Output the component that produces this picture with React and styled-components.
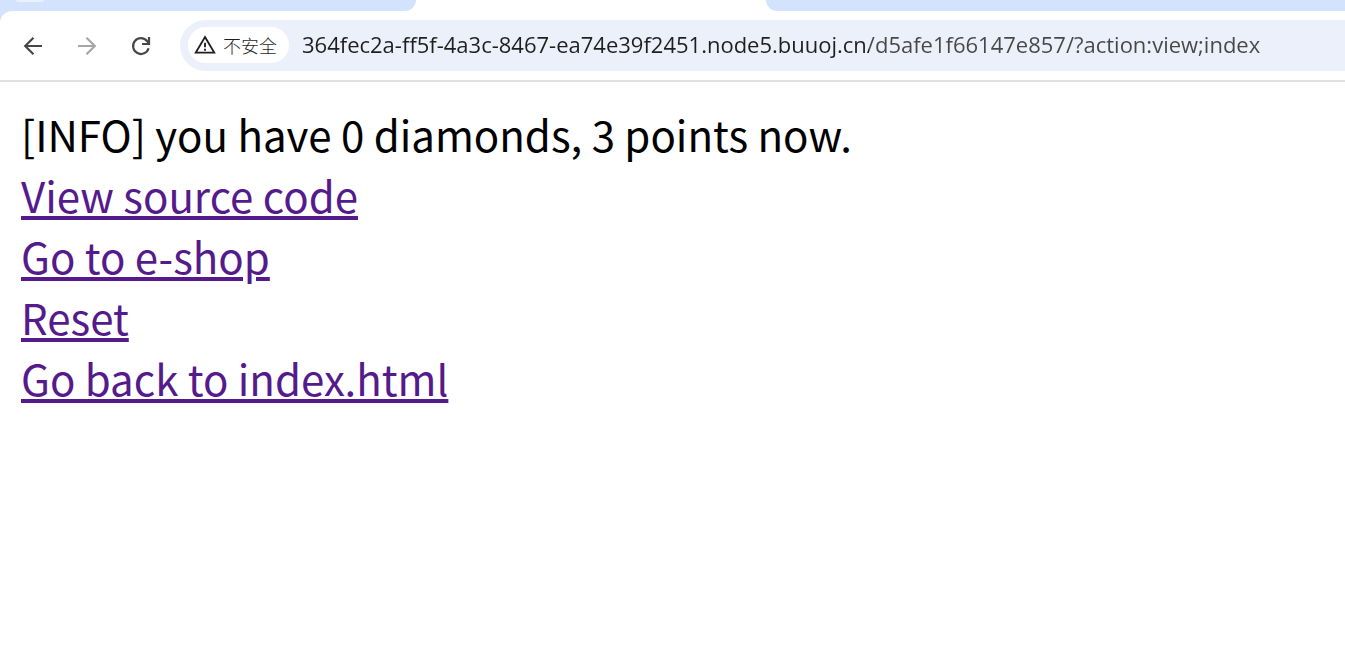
import React from "react";
import styled, { createGlobalStyle } from "styled-components";

const GlobalStyle = createGlobalStyle`
  * { box-sizing: border-box; }
  body {
    margin: 0;
    background: #ffffff;
    color: #000000;
    font-family: "Noto Sans CJK SC", "Noto Sans", sans-serif;
  }
`;

const TabStrip = styled.div`
  display: flex;
  height: 11px;
  background: #ffffff;
`;

const InactiveTabs = styled.div`
  flex: ${(p) => (p.$grow ? "1" : "0 0 416px")};
  padding-left: ${(p) => (p.$grow ? "0" : "16px")};
  background: #d3e3fd;
  border-radius: ${(p) => (p.$grow ? "0 0 0 16px" : "0 0 16px 0")};
`;

const TabSearch = styled.div`
  width: 28px;
  height: 2px;
  background: #e9f0fe;
  border-radius: 0 0 8px 8px;
`;

const ActiveTab = styled.div`
  flex: 0 0 350px;
`;

const ToolbarFrame = styled.div`
  background: linear-gradient(to right, #d3e3fd 16px, #ffffff 16px);
`;

const Toolbar = styled.header`
  display: flex;
  align-items: center;
  height: 71px;
  padding: 0 0 0 20px;
  background: #ffffff;
  border-bottom: 2px solid #e1e1e1;
  border-top-left-radius: 12px;
`;

const Nav = styled.nav`
  display: flex;
  gap: 28px;
  margin-right: 26px;
`;

const IconButton = styled.button`
  display: flex;
  width: 26px;
  height: 26px;
  padding: 0;
  border: 0;
  background: none;
  color: ${(p) => (p.disabled ? "#a6a6a6" : "#474747")};
`;

const AddressBar = styled.div`
  display: flex;
  flex: 1;
  align-items: center;
  min-width: 0;
  height: 51px;
  padding: 0 0 1px 8px;
  background: #ecf0fa;
  border-radius: 26px 0 0 26px;
`;

const SecurityChip = styled.button`
  display: flex;
  flex: 0 0 auto;
  align-items: center;
  gap: 6px;
  width: 101px;
  height: 36px;
  padding: 0 0 0 5px;
  border: 0;
  border-radius: 18px;
  background: #ffffff;
  color: #1f1f1f;
  font: 300 18px/24px "Noto Sans CJK SC", sans-serif;
  white-space: nowrap;
`;

const UrlInput = styled.input`
  flex: 1;
  min-width: 0;
  height: 36px;
  margin-left: 13px;
  padding: 0 0 2px;
  border: 0;
  outline: 0;
  color: #1f1f1f;
  font: 22px/32px "Open Sans", sans-serif;
  /* The host is darker than the path that follows it. */
  background: linear-gradient(to right, #1f1f1f 567px, #474747 567px);
  background-clip: text;
  -webkit-background-clip: text;
  -webkit-text-fill-color: transparent;
`;

const Page = styled.main`
  padding: 21px;
  font-size: 42px;
  line-height: 61px;
`;

const Info = styled.p`
  margin: 0;
`;

const Links = styled.div`
  display: flex;
  flex-direction: column;
  align-items: flex-start;
`;

const PageLink = styled.a`
  color: #551a8b;
  text-decoration: underline;
`;

const Icon = ({ size = 26, children }) => (
  <svg width={size} height={size} viewBox="0 0 26 26" fill="none" stroke="currentColor" strokeWidth="2.2" aria-hidden="true">
    {children}
  </svg>
);

const links = ["View source code", "Go to e-shop", "Reset", "Go back to index.html"];

export default function App() {
  return (
    <>
      <GlobalStyle />
      <TabStrip>
        <InactiveTabs>
          <TabSearch />
        </InactiveTabs>
        <ActiveTab />
        <InactiveTabs $grow />
      </TabStrip>
      <ToolbarFrame>
        <Toolbar>
          <Nav aria-label="Browser">
            <IconButton aria-label="Back">
              <Icon><path d="M22 13H6M13.500 4.700 5.200 13l8.300 8.300" /></Icon>
            </IconButton>
            <IconButton aria-label="Forward" disabled>
              <Icon><path d="M4 13h16M12.500 4.700 20.800 13l-8.300 8.300" /></Icon>
            </IconButton>
            <IconButton aria-label="Reload">
              <Icon>
                <path d="M20.600 15.200A7.900 7.900 0 1 1 19.200 8.200L21 10.300" />
                <path d="M21 4v7h-7" />
              </Icon>
            </IconButton>
          </Nav>
          <AddressBar>
            <SecurityChip>
              <Icon size={24}>
                <path d="M13 4.300 23 21.200H3Z" strokeWidth="2" />
                <path d="M13 10.500v5M13 17v2.200" strokeWidth="2" />
              </Icon>
              不安全
            </SecurityChip>
            <UrlInput
              aria-label="Address"
              defaultValue="364fec2a-ff5f-4a3c-8467-ea74e39f2451.node5.buuoj.cn/d5afe1f66147e857/?action:view;index"
            />
          </AddressBar>
        </Toolbar>
      </ToolbarFrame>
      <Page>
        <Info>[INFO] you have 0 diamonds, 3 points now.</Info>
        <Links>
          {links.map((label) => (
            <PageLink key={label} href="#">{label}</PageLink>
          ))}
        </Links>
      </Page>
    </>
  );
}
